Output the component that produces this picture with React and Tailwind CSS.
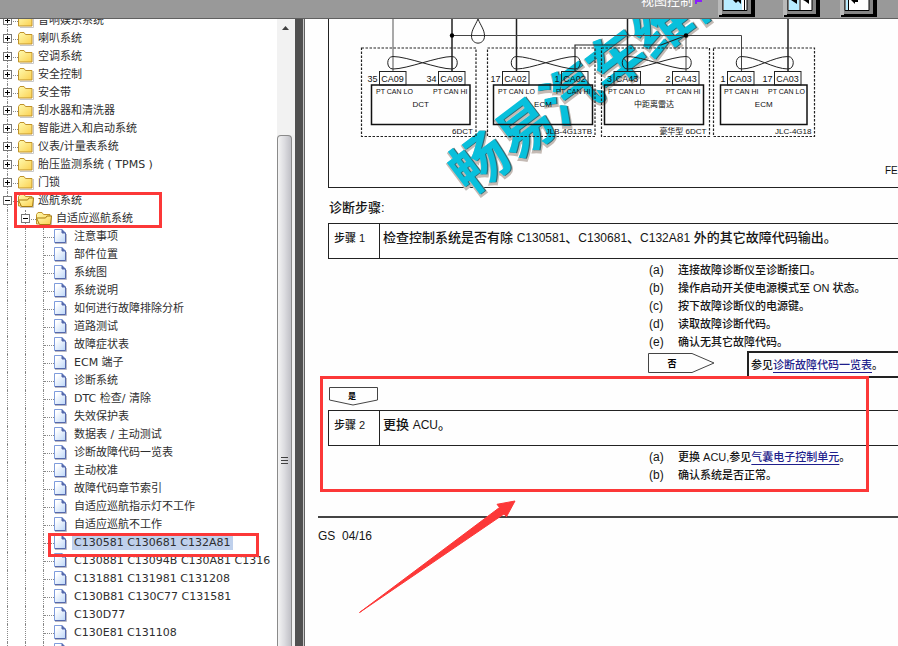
import React from "react";

const FOLDERS = [
  "音响娱乐系统",
  "喇叭系统",
  "空调系统",
  "安全控制",
  "安全带",
  "刮水器和清洗器",
  "智能进入和启动系统",
  "仪表/计量表系统",
  "胎压监测系统 ( TPMS )",
  "门锁",
];

const PAGES = [
  "注意事项",
  "部件位置",
  "系统图",
  "系统说明",
  "如何进行故障排除分析",
  "道路测试",
  "故障症状表",
  "ECM 端子",
  "诊断系统",
  "DTC 检查/ 清除",
  "失效保护表",
  "数据表 / 主动测试",
  "诊断故障代码一览表",
  "主动校准",
  "故障代码章节索引",
  "自适应巡航指示灯不工作",
  "自适应巡航不工作",
  "C130581 C130681 C132A81",
  "C130881 C13094B C130A81 C1316",
  "C131881 C131981 C131208",
  "C130B81 C130C77 C131581",
  "C130D77",
  "C130E81 C131108",
  "C131181",
];

const SELECTED = "C130581 C130681 C132A81";

function FolderIcon({ open }) {
  return (
    <svg width="18" height="18" viewBox="0 0 18 18" className="shrink-0" aria-hidden="true">
      <defs>
        <linearGradient id="folder" x1="0" y1="0" x2="1" y2="1">
          <stop offset="0" stopColor="#fffbb0" />
          <stop offset="1" stopColor="#fbd050" />
        </linearGradient>
      </defs>
      <path d="M2 15.500H15.500V5" fill="none" stroke="#c8c8c8" />
      <path d="M0.500 14V4.500L2 2.500H6L7.500 4.500H14V14Z" fill="url(#folder)" stroke="#c0922a" />
      {open && <path d="M3.500 14.500L0.500 8H9.500L11 6H15.500L14.500 14.500Z" fill="url(#folder)" stroke="#a87c10" />}
    </svg>
  );
}

function PageIcon() {
  return (
    <svg width="18" height="18" viewBox="0 0 18 18" className="shrink-0" aria-hidden="true">
      <defs>
        <linearGradient id="page" x1="0" y1="0" x2="1" y2="1">
          <stop offset="0.2" stopColor="#ffffff" />
          <stop offset="1" stopColor="#bcd6f8" />
        </linearGradient>
      </defs>
      <path d="M1 15.500H12.500V6" fill="none" stroke="#b9b9c4" />
      <path d="M0.500 1.500H8L11.500 5V14.500H0.500Z" fill="url(#page)" stroke="#7f9cdc" />
      <path d="M8 1.500V5H11.500V14.500H1" fill="none" stroke="#5468ac" />
      <path d="M8 1.500L11.500 5H8Z" fill="#5468ac" />
    </svg>
  );
}

function Guide() {
  return (
    <span className="flex w-[18px] shrink-0 self-stretch pl-[7px]">
      <span className="border-l border-dotted border-[#888888]" />
    </span>
  );
}

function Toggle({ open, label }) {
  return (
    <span className="relative flex w-[18px] shrink-0 items-center self-stretch pl-[7px]">
      <span className="self-stretch border-l border-dotted border-[#888888]" />
      <span className="w-[10px] border-t border-dotted border-[#888888]" />
      <button
        type="button"
        aria-expanded={open}
        aria-label={label}
        className="absolute left-[3px] top-1 flex size-[9px] items-center justify-center border border-[#777777] bg-white text-black"
      >
        <svg width="5" height="5" viewBox="0 0 5 5" className="shrink-0" aria-hidden="true">
          <path d={open ? "M0 2.500H5" : "M0 2.500H5M2.500 0V5"} stroke="currentColor" />
        </svg>
      </button>
    </span>
  );
}

function Tree() {
  return (
    <nav className="min-h-0 w-[277px] shrink-0 overflow-hidden bg-white text-[11px] leading-[18px] text-[#2e2e2e]">
      <ul className="-mt-[7px]">
        {FOLDERS.map((name) => (
          <li key={name} className="flex h-[18px] items-center whitespace-nowrap">
            <Toggle open={false} label={"展开 " + name} />
            <FolderIcon />
            <a href="#folder" className="pl-0.5">{name}</a>
          </li>
        ))}
        <li className="flex h-[18px] items-center whitespace-nowrap">
          <Toggle open label="折叠 巡航系统" />
          <FolderIcon open />
          <a href="#folder" className="pl-0.5">巡航系统</a>
        </li>
        <li className="flex h-[18px] items-center whitespace-nowrap">
          <Guide />
          <Toggle open label="折叠 自适应巡航系统" />
          <FolderIcon open />
          <a href="#folder" className="pl-0.5">自适应巡航系统</a>
        </li>
        {PAGES.map((name) => (
          <li key={name} className="flex h-[18px] items-center whitespace-nowrap">
            <Guide />
            <Guide />
            <span className="flex w-[18px] shrink-0 items-center self-stretch pl-[7px]">
              <span className="self-stretch border-l border-dotted border-[#888888]" />
              <span className="w-[10px] border-t border-dotted border-[#888888]" />
            </span>
            <PageIcon />
            <a
              href="#page"
              className={name === SELECTED ? "bg-[#bfd0ec] px-0.5 leading-[14px]" : "px-0.5"}
            >
              {name}
            </a>
          </li>
        ))}
      </ul>
    </nav>
  );
}

function ScrollBar() {
  return (
    <div className="flex w-[18px] shrink-0 flex-col bg-[#f0f0f0]" aria-hidden="true">
      <div className="flex h-[116px] justify-center bg-[#f2f2f2] pr-0.5 pt-[7px]">
        <svg width="7" height="4" viewBox="0 0 7 4">
          <path d="M3.500 0L7 4H0Z" fill="#404040" />
        </svg>
      </div>
      <div className="mr-[3px] flex flex-1 justify-center rounded-t-sm border border-b-0 border-[#8a8a8a] bg-linear-to-r from-[#f4f4f4] via-[#dcdce0] to-[#c0c0c6] pt-[321px]">
        <svg width="7" height="8" viewBox="0 0 7 8">
          <path d="M0 0.500H7M0 3.500H7M0 6.500H7" stroke="#404040" />
        </svg>
      </div>
    </div>
  );
}

function ViewButton({ label, children, className }) {
  return (
    <button type="button" aria-label={label} className={className}>
      <svg width="37" height="17" viewBox="0 0 37 17">
        <path d="M0 0H5V14L1 17H0Z" fill="#b9b9b9" />
        <path d="M1 17V15H4V0H37V17Z" fill="#000000" />
        <path d="M4 0H33V14H4Z" fill="#858585" />
        <path d="M5 -1H29V10.500H5Z" fill="#ffffff" stroke="#000000" />
        {children}
      </svg>
    </button>
  );
}

function Header() {
  return (
    <header className="flex h-[19px] shrink-0 items-end justify-end overflow-hidden border-b border-[#606060] bg-[#999999] pb-px pr-[21px]">
      <span className="self-start text-[13px] leading-[14px] text-white">
        <span className="-mt-[6px] block">视图控制</span>
      </span>
      <svg width="8" height="5" viewBox="0 0 8 5" className="mr-[15px] ml-0.5 self-start" aria-hidden="true">
        <path d="M1 0V4M1 1H5V0M6 0V2" fill="none" stroke="#8a1cff" strokeWidth="2" />
      </svg>
      <ViewButton label="显示左侧" className="mr-7">
        <path d="M6 0H24V10H6Z" fill="#b9ecff" />
        <path d="M26.500 0V10" stroke="#000000" />
        <path d="M15 0H23V4L20 1L18 3Z" fill="#000000" />
      </ViewButton>
      <ViewButton label="显示两侧" className="mr-5">
        <path d="M6 0H16V10H6Z" fill="#b9ecff" />
        <path d="M17 0V10M12 0V1" stroke="#000000" />
        <path d="M8 0H14V4ZM20 0H26V4L22 1Z" fill="#000000" />
      </ViewButton>
      <ViewButton label="显示右侧">
        <path d="M6 0H8V10H6Z" fill="#b9ecff" />
        <path d="M8.500 0V10" stroke="#000000" />
        <path d="M11 0L15 4V2H18V0Z" fill="#000000" />
      </ViewButton>
    </header>
  );
}

const UNITS = [
  { frame: [361.5, 476], box: [371.5, 470], pins: [{ n: "35", x: 379.5, c: "CA09", t: "PT CAN LO", tx: 376 }, { n: "34", x: 438.5, c: "CA09", t: "PT CAN HI", tx: 433 }], name: "DCT", note: "6DCT", loop: [393, 452] },
  { frame: [487.5, 595], box: [493.5, 592.5], pins: [{ n: "17", x: 502.5, c: "CA02", t: "PT CAN LO", tx: 498 }, { n: "1", x: 561.5, c: "CA02", t: "PT CAN HI", tx: 556 }], name: "ECM", note: "JLB-4G13TB", loop: [516.5, 575] },
  { frame: [601.5, 709.5], box: [604.5, 703.5], pins: [{ n: "3", x: 614, c: "CA43", t: "PT CAN LO", tx: 608 }, { n: "2", x: 672.5, c: "CA43", t: "PT CAN HI", tx: 666 }], name: "中距离雷达", note: "豪华型 6DCT", loop: [627.5, 686] },
  { frame: [713.5, 814.5], box: [720.5, 807], pins: [{ n: "1", x: 727.5, c: "CA03", t: "PT CAN HI", tx: 724 }, { n: "17", x: 774.5, c: "CA03", t: "PT CAN LO", tx: 768 }], name: "ECM", note: "JLC-4G18", loop: [741.5, 788] },
];

function WiringDiagram() {
  return (
    <svg width="569" height="168" viewBox="329 19 569 168" className="block overflow-visible" role="img" aria-label="CAN 网络电路图">
      <clipPath id="sheet">
        <rect x="305" y="19" width="620" height="200" />
      </clipPath>
      <g clipPath="url(#sheet)">
        <g transform="translate(480 163) rotate(-37)" fontSize="57" fontWeight="700">
          <text x="-29" y="22" fill="#c4bab4" stroke="#c4bab4" strokeWidth="3">畅易汽车维修</text>
          <text x="-28" y="21" fill="#2f6a74">畅易汽车维修</text>
          <text x="-29" y="20" fill="#08c0dc">畅易汽车维修</text>
        </g>
      </g>
      <g fill="none" stroke="#222222">
        <path d="M393 19V71" stroke="#555555" />
        <path d="M452 19V71M516.500 19V71M627.500 19V71M788 19V71" strokeWidth="1.500" />
        <path d="M452 35.500H741.500V71M686 35.500V71" stroke="#444444" />
        <path d="M575 71V45H661L686 35.500" strokeWidth="1.200" />
        <path d="M478 19C475 26 471.500 30 471.500 36C471.500 45.500 484.500 45.500 484.500 36C484.500 30 481 26 478 19Z" />
        {UNITS.map((u) => (
          <g key={u.note}>
            <path
              d={`M${u.loop[0]} 56.500C${u.loop[0] + 14} 56.500 ${u.loop[1] - 14} 69 ${u.loop[1]} 69C${u.loop[1] + 7} 69 ${u.loop[1] + 7} 56.500 ${u.loop[1]} 56.500C${u.loop[1] - 14} 56.500 ${u.loop[0] + 14} 69 ${u.loop[0]} 69C${u.loop[0] - 7} 69 ${u.loop[0] - 7} 56.500 ${u.loop[0]} 56.500Z`}
            />
            <rect x={u.frame[0]} y="48" width={u.frame[1] - u.frame[0]} height="88.500" strokeDasharray="2.500 1.500" strokeWidth="1.200" />
            <rect x={u.box[0]} y="85" width={u.box[1] - u.box[0]} height="39.500" stroke="#111111" strokeWidth="1.500" />
            {u.pins.map((p) => (
              <rect key={p.x} x={p.x} y="71.500" width="26.500" height="13.500" />
            ))}
          </g>
        ))}
      </g>
      <circle cx="452" cy="35.500" r="2.200" />
      <circle cx="686" cy="35.500" r="2.200" />
      <g fill="#101010" fontSize="8">
        {UNITS.map((u) => (
          <g key={u.note}>
            {u.pins.map((p) => (
              <g key={p.x}>
                <text x={p.x - 2} y="82" fontSize="9" textAnchor="end">{p.n}</text>
                <text x={p.x + 13} y="82" fontSize="9" textAnchor="middle">{p.c}</text>
                <text x={p.tx} y="94" fontSize="7">{p.t}</text>
              </g>
            ))}
            <text x={(u.box[0] + u.box[1]) / 2} y="107" textAnchor="middle">{u.name}</text>
            <text x={u.frame[1] - 3} y="134" textAnchor="end">{u.note}</text>
          </g>
        ))}
        <text x="885" y="174" fontSize="10">FE</text>
      </g>
    </svg>
  );
}

function StepTable({ step, children }) {
  return (
    <table className="w-full border-collapse border border-r-0 border-[#222222] text-left">
      <tbody>
        <tr className="h-[35px] align-top">
          <th scope="row" className="w-[51px] border-r border-[#222222] pl-[5px] pt-1 text-[11px] font-medium leading-5">
            {step}
          </th>
          <td className="whitespace-nowrap pl-[3px] pt-1 text-[13px] font-medium leading-5">{children}</td>
        </tr>
      </tbody>
    </table>
  );
}

function ActionList({ items }) {
  return (
    <ol className="ml-[321px] pt-0.5 text-[11px] font-medium leading-[18px]">
      {items.map((item, i) => (
        <li key={i} className="flex whitespace-nowrap">
          <span className="w-[29px] shrink-0 text-xs font-normal leading-[18px]">({"abcde"[i]})</span>
          <span>{item}</span>
        </li>
      ))}
    </ol>
  );
}

function DocLink({ children }) {
  return (
    <a href="#ref" className="text-[#1f1f8c] underline underline-offset-3">
      {children}
    </a>
  );
}

function Manual() {
  return (
    <main className="min-w-0 flex-1 overflow-hidden border-l border-[#606060] bg-[#fefefe] pl-[13px] text-[#151515]">
      <div className="pl-[10px]">
        <figure className="border-b border-l border-[#222222]">
          <WiringDiagram />
        </figure>
        <h2 className="pl-px pt-1 text-[13px] font-medium leading-[31px]">诊断步骤:</h2>
        <StepTable step="步骤 1">
          检查控制系统是否有除 <span className="text-xs">C130581</span>、<span className="text-xs">C130681</span>、
          <span className="text-xs">C132A81</span> 外的其它故障代码输出。
        </StepTable>
        <ActionList
          items={[
            "连接故障诊断仪至诊断接口。",
            "操作启动开关使电源模式至 ON 状态。",
            "按下故障诊断仪的电源键。",
            "读取故障诊断代码。",
            "确认无其它故障代码。",
          ]}
        />
        <div className="flex h-[27px] items-start pl-[320px]">
          <svg width="67" height="20" viewBox="0 0 67 20" className="mt-0.5 shrink-0">
            <path d="M0.500 0.500H44L66 10L44 19.500H0.500Z" fill="none" stroke="#444444" />
            <text x="24" y="14" fontSize="9" fontWeight="700" textAnchor="middle">否</text>
          </svg>
          <p className="ml-8 flex-1 self-stretch whitespace-nowrap border-2 border-r-0 border-[#222222] pl-0.5 text-[11px] font-medium leading-6">
            参见<DocLink>诊断故障代码一览表</DocLink>。
          </p>
        </div>
        <svg width="51" height="19" viewBox="0 0 51 19" className="mb-1 mt-[9px] block">
          <path d="M1.500 0.500H49.500V13L25 18L1.500 13Z" fill="none" stroke="#444444" />
          <text x="24" y="12" fontSize="8" fontWeight="700" textAnchor="middle">是</text>
        </svg>
        <StepTable step="步骤 2">
          更换 <span className="text-xs">ACU</span>。
        </StepTable>
        <ActionList
          items={[
            <>更换 ACU,参见<DocLink>气囊电子控制单元</DocLink>。</>,
            "确认系统是否正常。",
          ]}
        />
      </div>
      <footer className="mt-8 whitespace-pre border-t-2 border-[#444444] pt-2 text-xs leading-5">GS  04/16</footer>
    </main>
  );
}

function Annotations() {
  return (
    <div className="pointer-events-none absolute inset-0" aria-hidden="true">
      <div className="absolute left-[14px] top-[192px] h-9 w-[148px] border-3 border-[#fc3838]" />
      <div className="absolute left-12 top-[533px] h-6 w-[211px] border-3 border-[#fc3838]" />
      <div className="absolute left-80 top-[376px] h-[116px] w-[549px] border-3 border-[#fc3838]" />
      <svg className="absolute left-[359px] top-[500px]" width="158" height="114" viewBox="359 500 158 114">
        <path d="M515 501L497 504.300L499.500 507.500L359.500 612.500L504 514L506.500 516.700Z" fill="#fc3838" stroke="#fc3838" />
      </svg>
    </div>
  );
}

export default function App() {
  return (
    <div className="relative flex h-screen flex-col overflow-hidden bg-white font-['Liberation_Sans','Noto_Sans_CJK_SC',sans-serif]">
      <Header />
      <div className="flex min-h-0 flex-1">
        <div className="flex min-h-0 shrink-0 font-['DejaVu_Sans','Noto_Sans_CJK_SC',sans-serif]">
          <Tree />
          <ScrollBar />
        </div>
        <div className="w-2 shrink-0 bg-[#505050]" />
        <div className="w-px shrink-0 bg-[#c8c8c8]" />
        <Manual />
      </div>
      <Annotations />
    </div>
  );
}
